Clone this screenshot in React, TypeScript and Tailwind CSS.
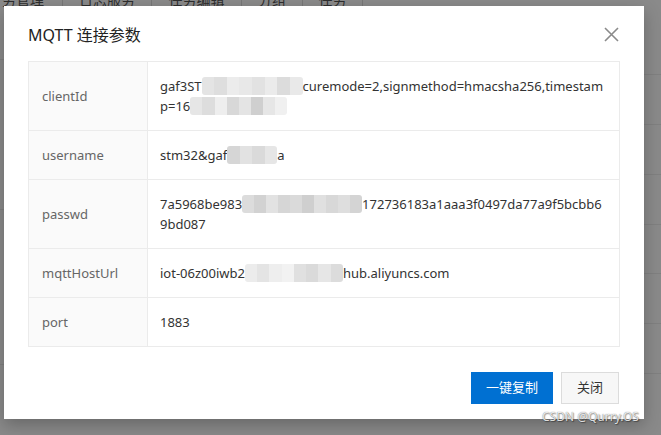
import React from "react";

const FONT = { fontFamily: '"Noto Sans", "Noto Sans CJK SC", sans-serif' };

function Mosaic({ w, shades }: { w: number; shades: string[] }) {
  return (
    <span className="inline-flex h-[18px] overflow-hidden rounded-[3px]" style={{ width: w }}>
      {shades.map((c, i) => (
        <span key={i} className="h-full flex-1" style={{ background: c }} />
      ))}
    </span>
  );
}

function Line({ children }: { children: React.ReactNode }) {
  return <div className="h-[20px] flex items-center whitespace-nowrap overflow-visible">{children}</div>;
}

function Row({ label, children, last }: { label: string; children: React.ReactNode; last?: boolean }) {
  return (
    <div className={`flex ${last ? "" : "border-b border-[#ebebeb]"}`}>
      <div className="w-[119px] shrink-0 bg-[#fafafa] border-r border-[#ebebeb] pl-[13px] py-[14px] text-[13px] leading-[20px] text-[#666] flex items-center">
        {label}
      </div>
      <div className="flex-1 pl-[12px] pr-[10px] py-[14px] text-[13px] leading-[20px] text-[#333] flex flex-col justify-center">
        {children}
      </div>
    </div>
  );
}

export default function App() {
  return (
    <div className="relative w-[661px] h-[435px] bg-[#8a8a8a] overflow-hidden" style={FONT}>
      {/* underlying page tab strip */}
      <div className="absolute left-0 top-[-10px] flex h-[20px] text-[14px] leading-[20px] text-[#2e2e2e]">
        <div className="w-[63px] border-r border-[#777] pl-[2px]">务管理</div>
        <div className="w-[89px] border-r border-[#777] text-center">日志服务</div>
        <div className="w-[90px] border-r border-[#777] text-center">任务编辑</div>
        <div className="w-[61px] border-r border-[#777] text-center">分组</div>
        <div className="w-[60px] border-r border-[#777] text-center">任务</div>
      </div>
      {/* faint rows of page behind */}
      <div className="absolute right-0 top-[20px] w-[20px] flex flex-col">
        <div className="h-[55px] border-b border-[#808080]" />
        <div className="h-[50px] border-b border-[#808080]" />
        <div className="h-[50px] border-b border-[#808080]" />
        <div className="h-[50px] border-b border-[#808080]" />
        <div className="h-[49px] border-b border-[#808080]" />
        <div className="h-[50px] border-b border-[#808080]" />
        <div className="h-[50px] border-b border-[#808080]" />
      </div>
      <div className="absolute left-0 top-[20px] w-[4px] flex flex-col">
        <div className="h-[40px] border-b border-[#808080]" />
        <div className="h-[150px] border-b border-[#808080]" />
        <div className="h-[155px] border-b border-[#808080]" />
      </div>

      {/* modal */}
      <div className="absolute left-[4px] top-[6px] w-[640px] h-[413px] bg-white shadow-[0_6px_16px_rgba(0,0,0,0.25)] flex flex-col px-[24px]">
        <div className="flex items-center justify-between h-[55px] pt-[2px]">
          <div className="text-[16px] text-[#222]">MQTT 连接参数</div>
          <svg width="15" height="15" viewBox="0 0 15 15" className="mr-[1px]">
            <path d="M1 1 L14 14 M14 1 L1 14" stroke="#8a8a8a" strokeWidth="1.6" fill="none" />
          </svg>
        </div>

        <div className="border border-[#ebebeb] w-[592px]">
          <Row label="clientId">
            <Line>
              gaf3ST
              <Mosaic w={101} shades={["#e4e4e4", "#dedede", "#ececec", "#e8e8e8", "#e2e2e2", "#ebebeb", "#dcdcdc", "#e9e9e9"]} />
              curemode=2,signmethod=hmacsha256,timestam
            </Line>
            <Line>
              p=16
              <Mosaic w={97} shades={["#e6e6e6", "#dddddd", "#eeeeee", "#d8d8d8", "#e4e4e4", "#cfcfcf", "#e6e6e6", "#f0f0f0"]} />
            </Line>
          </Row>
          <Row label="username">
            <Line>
              stm32&amp;gaf
              <Mosaic w={50} shades={["#d6d6d6", "#e2e2e2", "#dadada", "#e6e6e6"]} />
              a
            </Line>
          </Row>
          <Row label="passwd">
            <Line>
              7a5968be983
              <Mosaic w={120} shades={["#dcdcdc", "#d2d2d2", "#e2e2e2", "#d6d6d6", "#dadada", "#cfcfcf", "#e0e0e0", "#d8d8d8", "#dedede", "#d4d4d4"]} />
              172736183a1aaa3f0497da77a9f5bcbb6
            </Line>
            <Line>9bd087</Line>
          </Row>
          <Row label="mqttHostUrl">
            <Line>
              iot-06z00iwb2
              <Mosaic w={98} shades={["#ececec", "#e4e4e4", "#eeeeee", "#f2f2f2", "#e0e0e0", "#dadada", "#e6e6e6", "#dcdcdc"]} />
              hub.aliyuncs.com
            </Line>
          </Row>
          <Row label="port" last>
            <Line>1883</Line>
          </Row>
        </div>

        <div className="flex justify-end gap-[8px] mt-[25px] pr-[1px]">
          <button className="w-[82px] h-[32px] bg-[#0070d2] text-white text-[13px]">一键复制</button>
          <button className="w-[58px] h-[32px] bg-[#f7f7f7] border border-[#dcdcdc] text-[#333] text-[13px]">关闭</button>
        </div>
      </div>

      {/* watermark */}
      <div
        className="absolute left-[542px] top-[409px] text-[12px] leading-[16px] text-[rgba(255,255,255,0.85)] whitespace-nowrap"
        style={{ textShadow: "0 0 1px rgba(0,0,0,0.6), 1px 1px 1px rgba(0,0,0,0.35)" }}
      >
        CSDN @Qurry.OS
      </div>
    </div>
  );
}
